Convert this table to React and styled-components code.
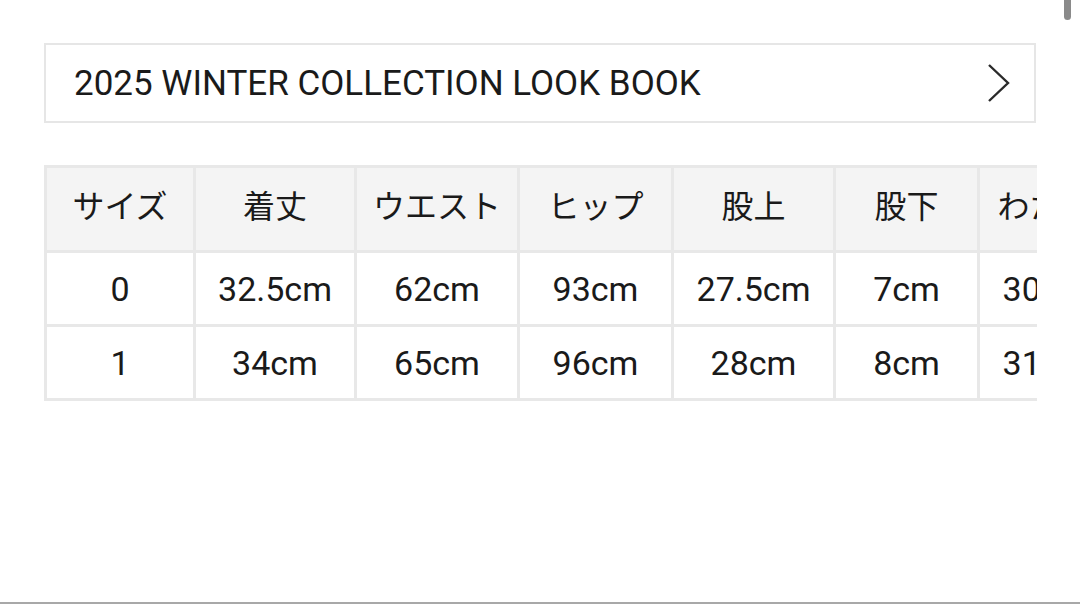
import styled, { createGlobalStyle } from "styled-components"

const GlobalStyle = createGlobalStyle`
  html, body {
    margin: 0;
    padding: 0;
    background: #ffffff;
  }
  body {
    font-family: Roboto, "Noto Sans CJK JP", sans-serif;
    color: #1a1a1a;
  }
`

const Page = styled.div`
  position: relative;
  width: 1080px;
  height: 604px;
  box-sizing: border-box;
  padding: 43px 0 0 44px;
  border-bottom: 2px solid #a8a8a8;
  overflow: hidden;
`

const ScrollThumb = styled.div`
  position: absolute;
  top: 0;
  right: 9px;
  width: 7px;
  height: 20px;
  background: #8a8a8a;
  border-radius: 0 0 4px 4px;
`

const Banner = styled.a`
  display: flex;
  align-items: center;
  justify-content: space-between;
  box-sizing: border-box;
  width: 992px;
  height: 80px;
  padding: 0 22px 0 28px;
  border: 2px solid #e6e6e6;
  color: #1a1a1a;
  text-decoration: none;
  font-size: 35px;
`

const TableScroll = styled.div`
  width: 993px;
  margin-top: 42px;
  overflow: hidden;
`

const SizeTable = styled.table`
  width: ${(p) => p.total}px;
  border-collapse: collapse;
  table-layout: fixed;
  font-size: 34px;
`

const HeadCell = styled.th`
  height: 72px;
  padding: 0 0 10px;
  border: 3px solid #e8e8e8;
  background: #f4f4f4;
  font-weight: 400;
  font-size: 32px;
  text-align: center;
  white-space: nowrap;
  overflow: hidden;
`

const Cell = styled.td`
  height: 71px;
  padding: 0;
  border: 3px solid #e8e8e8;
  text-align: center;
  white-space: nowrap;
  overflow: hidden;
`

const columns = [
  { label: "サイズ", w: 149 },
  { label: "着丈", w: 161 },
  { label: "ウエスト", w: 163 },
  { label: "ヒップ", w: 154 },
  { label: "股上", w: 162 },
  { label: "股下", w: 144 },
  { label: "わたり", w: 134 },
]

const rows = [
  ["0", "32.5cm", "62cm", "93cm", "27.5cm", "7cm", "30cm"],
  ["1", "34cm", "65cm", "96cm", "28cm", "8cm", "31cm"],
]

const total = columns.reduce((s, c) => s + c.w, 0)

function Chevron() {
  return (
    <svg width="26" height="42" viewBox="0 0 26 42" fill="none">
      <path d="M3 3 L22 21 L3 39" stroke="#2a2a2a" strokeWidth="2.4" />
    </svg>
  )
}

export default function App() {
  return (
    <>
      <GlobalStyle />
      <Page>
        <ScrollThumb />
        <Banner href="#">
          <span>2025 WINTER COLLECTION LOOK BOOK</span>
          <Chevron />
        </Banner>
        <TableScroll>
          <SizeTable total={total}>
            <colgroup>
              {columns.map((c) => (
                <col key={c.label} style={{ width: c.w }} />
              ))}
            </colgroup>
            <thead>
              <tr>
                {columns.map((c) => (
                  <HeadCell key={c.label}>{c.label}</HeadCell>
                ))}
              </tr>
            </thead>
            <tbody>
              {rows.map((r) => (
                <tr key={r[0]}>
                  {r.map((v, i) => (
                    <Cell key={i}>{v}</Cell>
                  ))}
                </tr>
              ))}
            </tbody>
          </SizeTable>
        </TableScroll>
      </Page>
    </>
  )
}
